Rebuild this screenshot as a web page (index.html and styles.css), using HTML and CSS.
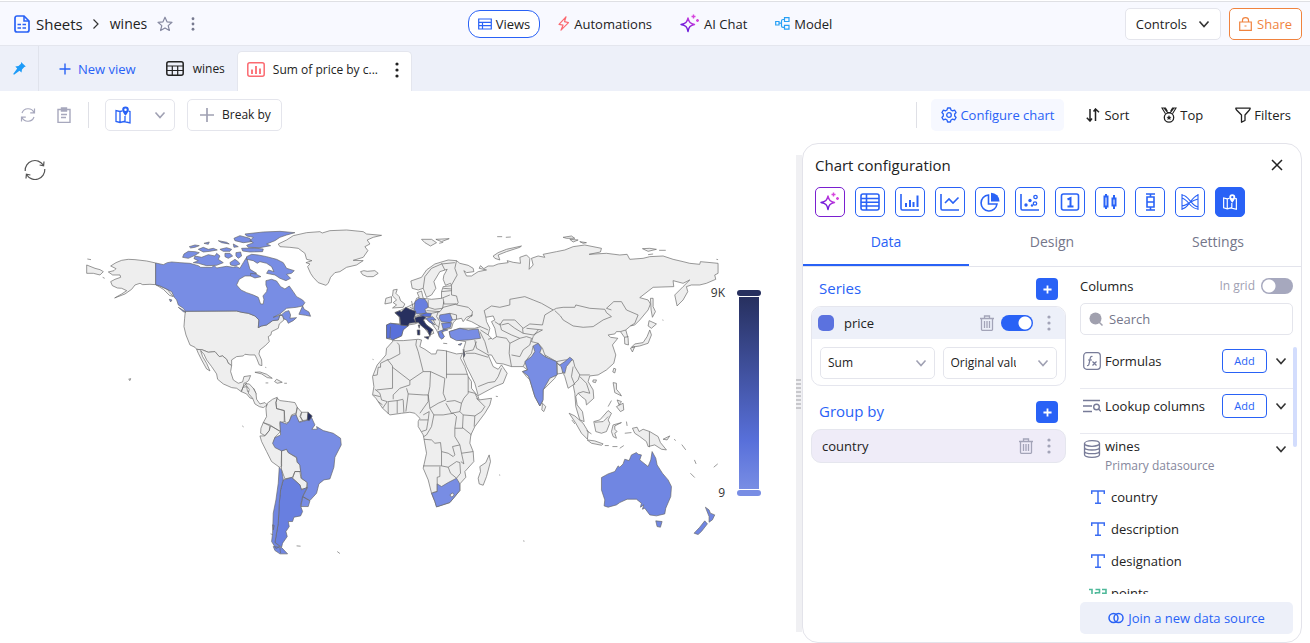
FILE: index.html
```html
<!DOCTYPE html>
<html lang="en">
<head>
<meta charset="utf-8">
<title>wines - Sheets</title>
<link rel="stylesheet" href="styles.css">
</head>
<body>
<svg class="defs" aria-hidden="true">
  <defs>
    <linearGradient id="magic" x1="0" y1="1" x2="1" y2="0"><stop offset="0" stop-color="#4a1be0"/><stop offset=".5" stop-color="#8a1fd8"/><stop offset="1" stop-color="#f04fe0"/></linearGradient>
    <symbol id="i-chev" viewBox="0 0 12 12"><path d="M1.500 3.500 6 8.500l4.500-5" fill="none" stroke="currentColor" stroke-width="1.600"/></symbol>
    <symbol id="i-dots" viewBox="0 0 4 16"><g fill="currentColor"><circle cx="2" cy="2" r="1.600"/><circle cx="2" cy="8" r="1.600"/><circle cx="2" cy="14" r="1.600"/></g></symbol>
    <symbol id="i-spark" viewBox="0 0 20 20"><g fill="none" stroke="url(#magic)" stroke-width="1.400" stroke-linejoin="round"><path d="M8 4c.9 4.200 2.300 5.600 6.500 6.500C10.300 11.400 8.900 12.800 8 17.500 7.100 12.800 5.700 11.400 1 10.500 5.700 9.600 7.100 8.200 8 4z"/></g><path d="M13.500.5v4M11.500 2.500h4M17.500 5v3M16 6.500h3" stroke="#d646dd" stroke-width="1.400"/></symbol>
    <symbol id="i-map" viewBox="0 0 16 18"><path d="M5 5.500 1 4.500v11l4 1 4-1 6 1.500V5.500l-1.500-.4M5 5.500l2.500-.6M5 5.500v11M10 10v6" fill="none" stroke="currentColor" stroke-width="1.300"/><path d="M10.500.5a3.300 3.300 0 0 0-3.300 3.300c0 2.200 3.300 6 3.300 6s3.300-3.800 3.300-6A3.300 3.300 0 0 0 10.500.5zm0 2a1.200 1.200 0 1 1 0 2.500 1.200 1.200 0 0 1 0-2.500z" fill="currentColor" fill-rule="evenodd"/></symbol>
    <symbol id="i-trash" viewBox="0 0 14 16"><path d="M0 3.500h14M4.500 3V1h5v2M1.500 4v10.500q0 .8.800.8h9.400q.8 0 .8-.8V4M4.500 6v7M7 6v7M9.500 6v7" fill="none" stroke="currentColor" stroke-width="1.300"/></symbol>
    <symbol id="i-text" viewBox="0 0 14 14"><path d="M.7 4V1h12.600v3M7 1v12.300M4 13.300h6" fill="none" stroke="currentColor" stroke-width="1.500"/></symbol>
    <symbol id="i-plus" viewBox="0 0 10 10"><path d="M5 .5v9M.5 5h9" fill="none" stroke="currentColor" stroke-width="2"/></symbol>
  </defs>
</svg>
<div class="app">
  <header class="header">
    <div class="crumbs">
      <svg class="icon-doc" viewBox="0 0 16 18"><path d="M10 1H3a2 2 0 0 0-2 2v12a2 2 0 0 0 2 2h10a2 2 0 0 0 2-2V6z" fill="none" stroke="#2962f6" stroke-width="1.700"/><path d="M10 1v5h5" fill="none" stroke="#2962f6" stroke-width="1.500"/><path d="M3.500 9.500h3.500M8.500 9.500H12M3.500 13h3.500M8.500 13H12" stroke="#2962f6" stroke-width="1.700"/></svg>
      <a class="crumb-root" href="#">Sheets</a>
      <svg class="icon-crumb" viewBox="0 0 8 12"><path d="M1.500 1.500 6 6l-4.500 4.500" fill="none" stroke="#333" stroke-width="1.200"/></svg>
      <a class="crumb-page" href="#">wines</a>
      <button class="ghost star" aria-label="Favourite"><svg viewBox="0 0 16 16"><path d="m8 1.200 2 4.600 5 .5-3.800 3.300 1.200 4.900L8 11.900l-4.400 2.600 1.200-4.900L1 6.300l5-.5z" fill="none" stroke="#8588a0" stroke-width="1.200" stroke-linejoin="round"/></svg></button>
      <button class="ghost dots" aria-label="More"><svg><use href="#i-dots"/></svg></button>
    </div>
    <nav class="modes">
      <a class="mode mode-on" href="#"><svg class="ic-views" viewBox="0 0 14 12"><path d="M.7 1h12.600v10H.7zM.7 4.300h12.600M.7 7.700h12.600M4.500 4.300V11" fill="none" stroke="#2962f6" stroke-width="1.200"/></svg>Views</a>
      <a class="mode" href="#"><svg class="ic-bolt" viewBox="0 0 12 15"><path d="M8 .8 1 8.300l4 .9-2 5 7.500-7.600-4-1z" fill="none" stroke="#fb6a71" stroke-width="1.200" stroke-linejoin="round"/></svg>Automations</a>
      <a class="mode" href="#"><svg class="ic-spark"><use href="#i-spark"/></svg>AI Chat</a>
      <a class="mode" href="#"><svg class="ic-model" viewBox="0 0 15 13"><path d="M.7 4.500H4v3.500H.7zM9.500.7H14v3.800H9.500zM9.500 8.300H14v3.800H9.500zM4 6.200h2.500M9.500 2.500H8Q6.500 2.500 6.500 4v5q0 1.300 1.500 1.300h1.500" fill="none" stroke="#27a0f5" stroke-width="1.200"/></svg>Model</a>
    </nav>
    <div class="header-actions">
      <button class="btn btn-plain">Controls<svg class="chev"><use href="#i-chev"/></svg></button>
      <button class="btn btn-share"><svg class="ic-lock" viewBox="0 0 13 14"><path d="M.7 5h11.600v8.300H.7zM3.500 5V3a3 2.300 0 0 1 6 0v2M5.500 9h2" fill="none" stroke="currentColor" stroke-width="1.200"/></svg>Share</button>
    </div>
  </header>

  <div class="viewbar">
    <button class="pin" aria-label="Pin"><svg viewBox="0 0 13 13"><path d="m8 0 4.800 4.500-1.500.6L9 7.500l-.5 3-2-1.800L1 12.800.2 12 4.200 6.500 2.300 4.500l3.200-.6L8 1.700z" fill="#1d9bf8"/></svg></button>
    <button class="newview"><svg class="plus-thin" viewBox="0 0 12 12"><path d="M6 .5v11M.5 6h11" stroke="currentColor" stroke-width="1.400"/></svg>New view</button>
    <button class="viewtab"><svg class="ic-grid" viewBox="0 0 18 15"><rect x=".8" y=".8" width="16.400" height="13.400" rx="2" fill="none" stroke="#222" stroke-width="1.500"/><path d="M1 5h16M1 9.500h16M6.300 5v9M11.700 5v9" stroke="#222" stroke-width="1.200"/></svg>wines</button>
    <div class="viewtab viewtab-on">
      <svg class="ic-grid" viewBox="0 0 18 15"><rect x=".8" y=".8" width="16.400" height="13.400" rx="2" fill="none" stroke="#fb6a71" stroke-width="1.500"/><path d="M5 7.500V12M9 4v8M13 6.500V12" stroke="#fb6a71" stroke-width="1.800"/></svg>
      <span>Sum of price by c...</span>
      <button class="ghost tabdots" aria-label="View menu"><svg><use href="#i-dots"/></svg></button>
    </div>
  </div>

  <div class="toolbar">
    <button class="ghost tool" aria-label="Refresh"><svg viewBox="0 0 16 16"><path d="M2 6a6.500 6.500 0 0 1 12-.5M14.500 1.500v4.300h-4.300M14 10a6.500 6.500 0 0 1-12 .5M1.500 14.500v-4.300h4.300" fill="none" stroke="currentColor" stroke-width="1.200"/></svg></button>
    <button class="ghost tool" aria-label="Clipboard"><svg viewBox="0 0 14 16"><path d="M1 2.500h12v13H1zM4.500 1h5v3h-5zM4 7.500h6M4 10.500h5" fill="none" stroke="currentColor" stroke-width="1.400"/></svg></button>
    <span class="rule"></span>
    <button class="btn btn-kind" aria-label="Chart type"><svg class="ic-map"><use href="#i-map"/></svg><svg class="chev chev-grey"><use href="#i-chev"/></svg></button>
    <button class="btn btn-break"><svg class="plus-grey" viewBox="0 0 14 14"><path d="M7 0v14M0 7h14" stroke="currentColor" stroke-width="1.700"/></svg>Break by</button>
    <div class="tools-right">
      <span class="rule"></span>
      <button class="act act-on"><svg class="ic16" viewBox="0 0 16 16"><path d="M6.600 1h2.800l.6 2 1.600.8 2-.7 1.500 2.400L13.700 7v2l1.400 1.500-1.500 2.400-2-.7-1.600.8-.6 2H6.600l-.6-2-1.600-.8-2 .7L.9 10.500 2.300 9V7L.9 5.500l1.500-2.400 2 .7L6 3z" fill="none" stroke="currentColor" stroke-width="1.300" stroke-linejoin="round"/><circle cx="8" cy="8" r="2.300" fill="none" stroke="currentColor" stroke-width="1.300"/></svg>Configure chart</button>
      <button class="act act-sort"><svg class="ic-sort" viewBox="0 0 14 14"><path d="M4 1v12M.8 9.800 4 13l2-2.500M9.500 13V1M13 4.200 9.500 1 7.500 3.500" fill="none" stroke="#222" stroke-width="1.500"/></svg>Sort</button>
      <button class="act"><svg class="ic16" viewBox="0 0 16 16"><path d="M4.500 6.800 1 1h3.500l2 3.500M11.500 6.800 15 1h-3.500l-2 3.500M3 1l3.500 4.500h3L13 1" fill="none" stroke="#222" stroke-width="1.100"/><circle cx="8" cy="10.500" r="4.700" fill="none" stroke="#222" stroke-width="1.300"/><path d="m8 8 .8 1.700 1.700.2-1.300 1.200.4 1.800L8 12l-1.600.9.400-1.800-1.300-1.200 1.700-.2z" fill="#222"/></svg>Top</button>
      <button class="act"><svg class="ic16" viewBox="0 0 16 16"><path d="M.8 1.200h14.400q0 1-1 2L10 8v5.500L6.500 15.200V8L1.800 3.200q-1-1-1-2z" fill="none" stroke="#222" stroke-width="1.300" stroke-linejoin="round"/></svg>Filters</button>
    </div>
  </div>

  <main class="main">
    <section class="chart">
      <button class="ghost reset" aria-label="Reset zoom"><svg viewBox="0 0 22 22"><path d="M1.200 12a9.800 9.800 0 0 1 18-6M20 2.500l-.4 4.300-4-.8M20.800 10a9.800 9.800 0 0 1-18 6M2 19.500l.4-4.300 4 .8" fill="none" stroke="#555" stroke-width="1.200"/></svg></button>
      <svg class="map" viewBox="80 225 645 335" role="img" aria-label="Sum of price by country">
        <g class="land" transform="translate(80 220) scale(.33333)">
          <path d="M227 129 200 123 165 119 145 118 125 121 108 128 92 138 108 146 102 152 85 156 98 165 120 165 122 172 105 178 92 185 97 197 112 204 125 205 140 212 125 222 104 234 135 222 155 208 165 195 180 190 188 194 210 193 227 194 240 198 262 208 280 230 268 226 250 208 227 194zM20 135 45 145 60 149 70 155 60 165 40 160 20 160zM22 117 33 119M68 172 74 175M146 478 152 476 150 482z"/>
          <path d="M316 274 470 273 485 277 505 280 525 288 537 300 535 323 545 318 560 315 578 302 595 300 600 285 608 287 612 300 598 312 595 325 575 335 573 345 565 350 568 365 555 378 540 390 537 402 545 420 546 437 538 435 530 415 525 405 510 405 495 403 490 408 470 410 455 420 455 437 445 430 440 418 428 408 418 410 405 395 385 397 368 390 350 388 345 382 330 375 318 345 312 320 314 295z"/>
          <path d="M350 388 368 390 385 397 405 395 418 410 428 408 440 418 445 430 455 437 452 455 460 480 475 490 488 486 492 470 512 467 506 482 498 488 492 490 490 500 484 515 470 505 455 503 430 492 413 478 410 462 395 440 380 420 372 403 362 392 368 410 380 430 390 453 380 447 365 420 355 400zM484 515 490 500 500 490 503 502 522 506 528 520 525 538 510 534 500 522zM490 502 500 500 503 515 520 510M525 457 540 456 560 463 577 475 562 473 545 462zM584 485 590 478 607 487 592 490zM557 489H565M613 490H621M556 442 559 443"/>
          <path d="M595 72 620 60 640 47 680 38 720 35 727 39 750 32 800 30 850 35 860 42 905 46 880 52 862 60 870 72 855 80 864 92 850 112 820 121 850 122 830 135 800 142 780 155 765 158 752 172 745 190 738 196 715 188 700 172 692 160 683 140 690 132 678 128 696 122 680 118 675 100 655 85 630 82 600 80zM842 155 852 152 862 154 885 152 895 160 880 170 862 170 848 164z"/>
          <g class="v1">
            <path d="M227 129 250 134 262 128 275 126 300 128 330 130 355 137 362 142 395 142 403 137 410 144 440 139 460 142 470 140 480 145 490 128 500 112 505 130 510 148 530 160 512 168 495 168 478 178 470 195 483 210 500 218 520 225 535 232 542 252 550 252 552 238 549 228 560 215 562 205 558 195 558 182 575 178 590 183 602 200 615 207 628 198 640 215 650 230 668 240 675 248 668 258 650 262 620 265 600 282 580 292 605 284 616 275 627 272 632 285 630 295 650 293 640 302 625 310 620 300 612 297 608 287 600 285 595 300 578 302 560 315 545 318 535 323 537 300 525 288 505 280 485 277 470 273 316 274 310 265 295 255 290 240 283 232 275 215 255 205 240 198 227 194z"/>
            <path d="M668 258 673 268 687 276 692 289 677 286 657 283zM500 110 515 103 535 105 560 110 590 118 610 128 620 145 643 152 635 160 620 163 632 175 618 182 600 175 585 165 560 160 566 150 582 155 575 140 560 130 540 125 532 130 520 122 500 118zM495 42 550 36 600 34 645 38 620 45 600 52 585 62 560 72 572 77 540 83 505 82 500 76 520 68 510 62 520 52 500 48zM462 55 480 47 510 55 515 65 490 68 465 62zM485 85 520 84 550 87 548 95 510 96 488 93zM345 108 365 112 385 104 405 108 410 100 420 108 415 118 430 128 410 136 380 137 355 130 340 128 355 122 342 116zM312 102 325 94 345 95 358 98 345 106 325 115 308 112zM355 88 370 82 385 88 400 85 412 90 390 94 370 96zM328 80 345 75 358 77 345 82 332 84zM372 70 388 66 385 73zM420 88 440 83 455 88 450 94 430 94zM415 62 440 67 448 72 425 68zM460 72 475 80 462 82zM435 100 450 100 458 108 445 115 435 110zM468 98 482 96 485 108 475 115 468 108zM450 128 465 118 475 125 480 132 465 138 452 135zM512 160 528 162 543 170 525 174 512 168zM295 262 305 268 318 277 310 275zM268 238 276 240 272 246z"/>
          </g>
        </g>
        <g class="land" transform="translate(220 380) scale(.33333)">
          <path d="M75 12 88 12 100 25 108 40 110 58 120 72 135 68 142 75 130 83 118 80 105 72 98 55 85 40 88 28zM142 70 158 58 172 52 168 68 170 86 193 92 195 125 180 128 182 155 165 145 150 135 130 128 140 110 138 85zM172 55 180 62 205 65 225 68 232 82 228 100 215 105 208 125 200 130 193 122 193 92 170 86 168 68zM232 82 245 97 240 110 248 122 236 127 228 108zM245 97 265 97 262 120 248 122 242 110zM130 128 150 138 148 152 135 167 122 160 123 145zM152 138 165 145 182 155 165 172 160 190 170 203 180 205 185 212 185 258 180 263 155 245 140 215 125 185 120 168 135 168 148 152zM185 213 200 208 205 218 230 234 232 248 240 252 242 275 225 275 218 292 195 297 185 270 184 250zM225 275 240 275 243 295 262 307 260 325 243 328 240 315 218 295zM67 138 71 141M230 498 242 499M352 515 360 521"/>
          <path class="v1" d="M180 125 200 132 208 125 215 108 228 104 238 127 262 121 275 113 285 135 276 148 292 148 290 140 310 152 340 160 362 175 364 195 345 232 342 262 330 297 312 300 297 312 290 340 270 362 248 350 262 325 262 308 245 295 242 272 240 256 232 246 230 232 205 218 200 208 185 213 165 203 158 190 165 173 182 165zM248 350 270 363 265 380 243 380z"/>
          <path class="v3" d="M190 300 215 293 240 315 245 330 262 322 248 350 242 378 248 395 242 408 222 412 218 425 205 425 208 440 198 455 202 470 188 490 185 502 165 488 168 470 175 430 178 370 182 330z"/>
          <path class="v2" d="M178 263 185 270 190 298 182 330 178 370 175 430 168 470 165 488 180 500 168 506 155 485 158 460 160 400 168 360 175 310zM158 435 163 437 160 450zM152 462 158 464M160 500 185 503 203 522 180 522 165 512zM180 505 182 520"/>
          <path class="v9" d="M264 97 277 108 268 122 262 120z"/>
        </g>
        <g class="land" transform="translate(360 220) scale(.33333)">
          <path d="M157 205 153 183 185 172 200 150 225 132 265 120 290 122 300 130 325 136 340 145 342 155 320 158 312 152 320 168 335 168 355 155 380 150 358 145 362 137 372 146 385 138 400 138 415 132 445 128 442 122 460 127 482 130 480 112 500 105 510 115 508 148 520 135 515 115 535 108 555 112 550 103 590 95 615 90 640 80 675 75 725 85 722 96 688 103 740 100 780 105 802 103 810 118 850 115 870 110 910 108 940 118 970 125 990 130 1020 133 1022 125 1075 130 1075 160 1065 165 1068 178 1040 190 1020 195 995 195 980 200 984 215 970 240 952 258 945 225 970 200 990 180 970 190 940 182 942 200 880 202 840 233 865 240 872 252 865 270 840 300 825 315 812 318 798 330 805 355 806 375 795 372 794 352 782 335 770 335 765 342 745 345 752 352 774 355 758 375 768 405 762 430 740 450 715 465 690 468 685 485 700 510 702 535 680 555 678 540 665 530 655 520 648 530 652 555 668 575 673 605 660 600 648 560 645 520 640 495 625 505 615 470 608 455 608 460 592 462 585 475 550 510 548 545 540 558 525 530 510 480 500 470 488 455 503 450 490 440 455 440 430 432 410 430 395 405 385 405 400 440 415 448 425 435 442 460 430 490 405 500 355 527 345 490 320 440 310 415 315 405 312 385 318 365 300 362 272 352 268 335 300 325 345 325 362 320 335 305 320 300 338 285 320 292 310 305 305 295 290 298 280 308 275 325 248 330 250 355 240 352 230 330 215 310 200 298 190 296 195 310 218 330 222 340 210 345 190 320 175 308 165 312 145 315 130 328 125 348 98 360 80 355 80 315 92 310 120 312 118 290 105 278 120 272 140 262 165 250 170 235 178 232 172 218 185 213 190 235 215 238 245 235 245 215 250 200 275 197 272 190 257 196 250 178 252 166 262 148 240 155 222 185 228 205 215 225 200 232 190 205 175 210z"/>
          <path d="M100 210 112 208 108 220 118 230 122 242 135 252 130 262 98 264 110 255 100 248 110 240 98 228zM78 235 95 230 95 248 75 252zM185 58 215 58 230 68 212 78 195 68zM228 58 268 56 245 65zM238 70 250 67M400 108 415 98 440 88 485 78 480 82 440 95 415 105 420 120 405 115zM412 50H427M438 52 453 51M610 52 635 48 645 55 620 55zM630 58 655 60 640 66zM660 65 680 68 670 70zM848 86 870 85 890 88 865 94zM898 91H918M865 104 880 102M1070 118 1075 119"/>
          <path d="M872 235 880 235 880 260 887 275 878 292 874 270zM868 302 890 312 875 325 865 318zM870 330 875 345 865 370 840 378 815 382 825 372 850 368 862 350zM812 385 825 380 818 396zM762 445 768 447 765 459 759 456zM700 480 710 480 707 488 699 486zM760 488 770 490 770 508 780 520 785 528 765 518zM770 560 790 550 792 570 782 575zM745 560 755 542M772 540 785 545 778 555zM548 550 558 560 552 575 546 570zM628 580 645 588 670 610 685 635 683 658 665 640 648 610zM682 660 705 663 730 672 725 676 695 670zM735 677H747M758 680H773M780 685 792 677M702 605 720 600 745 572 755 580 745 600 750 610 740 635 725 640 708 635zM705 607 730 605 745 590M760 615 785 608 765 618 765 628 772 635 765 640 770 655 760 650 755 635zM800 605 802 618M795 640 815 638M818 625 832 622 838 635 850 628 870 635 895 650 902 668 920 690 905 688 885 675 865 680 860 665 840 650 825 640zM869 635V682M910 658 930 648 922 660zM943 658 948 662M966 674 978 690M1004 720 1009 732M1062 742 1074 732M908 300 911 301M636 600 645 612M680 632 695 642"/>
          <path class="line" d="M378 292 373 272 395 258 420 262 450 255 450 238 495 230 520 240 545 250 580 270 590 265 610 262 645 262 648 255 690 265 735 268 740 278 755 290 730 300 700 320 670 322 640 318 610 300 602 288 585 272M580 270 555 285 548 315 510 312 490 325 465 300 430 300 420 315 405 305M755 270 740 265 762 245 785 245 800 270 835 285 825 310 812 318M782 335 798 330M794 352 806 350M535 330 520 350 515 365 535 370 548 385 555 405 590 425 615 420 640 420 645 440 660 465 690 465M592 425 592 462M605 440 615 460M640 495 655 480 660 465M660 470 680 490 690 520M655 520 670 515 690 520M640 440 635 470 645 495M360 335 375 365 385 400M385 358 410 350 440 355 450 370 448 400 455 440M450 370 480 355 500 350 515 355M455 405 480 410 490 390 510 375 515 355M490 440 500 420 515 400 520 378M420 310 425 330 455 345 480 355M425 315 445 310 465 325 490 340M500 325 548 330 520 345 490 340 488 325M345 360 350 385 385 405M315 395 340 390 350 365M318 400 345 400 385 412M355 500 385 488 405 485 415 470 425 445M362 320 385 330M362 330 385 345M290 122 285 145 292 165 275 195M245 130 255 150M190 205 195 170 215 145 245 132 285 128M275 197 275 225 290 228 295 248 290 255 325 262 338 275 335 290M245 215 275 212M250 205 275 207M245 235 270 225M250 235 252 252 290 252M205 240 205 262 225 268 248 265 252 245M200 272 240 275 250 262 290 252M235 275 230 290 240 305 235 330M215 280 240 275M220 300 228 315 238 322M150 262 168 270M165 290 180 285M155 243 160 265M270 280 290 285 290 298M278 300 290 298M555 405 562 418 590 428"/>
          <path class="water" d="M378 292 400 288 405 300 395 305 405 325 410 350 398 358 385 345 390 325 380 305z"/>
          <path class="v3" d="M165 245 178 235 195 237 203 250 205 262 195 268 200 280 170 282 163 268z"/>
          <path class="v4" d="M80 315 92 310 145 318 130 330 125 348 98 360 92 355 80 355zM92 320 90 355M179 285 200 279 215 280 212 290 190 290z"/>
          <path class="v9" d="M105 278 120 272 124 276 138 262 150 268 168 274 166 284 162 295 168 308 148 310 145 318 122 315 120 292zM165 293 175 290 190 288 198 293 190 300 200 315 220 330 215 335 210 350 203 332 185 318 175 307 167 308zM193 351 208 350 205 358zM172 330 180 330 180 345 173 345zM175 315 180 315 178 325zM310 388 315 405 311 412zM992 760 1005 773"/>
          <path class="v2" d="M198 295 218 290 228 300 212 300 225 315 208 306zM240 285 270 280 278 300 270 308 245 305 238 295zM245 310 275 308 272 322 250 328zM235 335 255 328 264 330 245 336 254 350 245 358 238 350zM250 370 262 371M295 374 306 370 302 376z"/>
          <path class="v1" d="M268 335 300 325 325 330 355 327 362 355 325 360 290 362 272 352zM520 378 535 370 545 385 540 398 555 410 590 425 592 465 570 475 550 510 550 540 540 558 525 530 510 480 505 468 488 455 503 450 495 425 515 410 525 395zM592 430 600 435 615 425 630 412 638 418 620 440 615 460 608 455 604 440z"/>
          <path class="v2" d="M725 773 745 762 765 755 775 738 780 742 790 732 795 718 808 722 815 705 830 698 835 703 845 705 840 720 865 740 873 720 877 695 888 715 892 735 908 760 925 780 935 800 933 830 918 865 915 882 890 888 870 885 855 865 848 868 852 855 842 862 845 850 830 838 802 838 780 848 770 855 745 862 733 858 735 840 725 810zM888 903 907 905 902 922 892 920zM1037 862 1048 870 1052 880 1065 885 1058 900 1048 907 1048 890zM1035 903 1043 912 1025 935 1015 944 1003 940 1020 922z"/>
          <path d="M490 963 494 964"/>
        </g>
        <g class="land" transform="translate(360 280) scale(.33333)">
          <path d="M98 182 130 182 175 178 185 180 180 200 195 208 215 222 228 222 232 210 255 212 290 222 308 220 302 235 315 260 325 290 335 305 335 325 355 350 358 360 395 355 390 375 375 400 345 440 333 465 330 490 340 515 342 545 315 575 318 592 300 612 300 632 270 668 230 681 225 665 215 640 205 600 190 565 200 520 192 475 190 465 175 440 175 425 180 415 165 400 150 397 125 400 90 405 68 385 48 355 38 345 42 320 38 290 52 255 65 240 78 225 80 205 98 185zM388 525 392 545 380 590 370 616 358 612 355 595 362 575 360 560 378 548zM38 238 41 239M408 349 414 350M418 585 421 586"/>
          <path class="line" d="M40 287 52 285 55 262 62 262 62 250 82 240M82 238 98 258 98 325 50 330M82 240 90 238 120 222 118 195 112 188M98 262 150 302 150 315 120 325 100 345 100 358M150 302 190 275 175 215 168 195 170 180M190 275 212 275 255 295M260 212V295M260 283H322M212 275 210 320 205 345 190 345 145 342 140 325M255 295 250 340 258 360 235 370 210 385 205 345M325 290 325 340 312 355 305 370 285 362 260 365M305 370 300 395 275 400 258 370M325 335 345 340 355 360M350 355 375 380 365 395 345 408 310 405 300 395M345 408 343 440M310 405 308 445 285 445M308 443 335 465M285 445 290 410 280 400 250 405 222 405 210 385M222 405 215 440 200 465 192 470M180 420 205 420 200 450 185 455M205 420 208 395 190 405M205 345 205 365 180 400M192 478 215 480 225 490 242 488 245 515 245 558 190 558M245 515 265 520 280 530 285 525 278 500 300 495 285 470 285 445M300 495 305 520 340 515M305 520 312 552 303 545M245 558 265 562 290 545 300 548 302 580 290 595 272 580 265 562M240 560V590L232 592V635L218 638M45 328 60 340 65 360 82 365M40 345 60 350M55 365 68 375M68 385 82 365M85 365V402M112 362V400M130 360 132 398M145 342 138 395M85 365 112 362 130 358"/>
          <path class="v1" fill-rule="evenodd" d="M215 640 232 635 232 612 245 620 265 608 290 595 300 612 300 632 270 668 230 681 225 665zM270 645 278 639 283 645 276 652z"/>
        </g>
      </svg>
      <div class="legend">
        <div class="legend-labels"><span>9K</span><span>9</span></div>
        <div class="legend-scale"><i class="cap cap-hi"></i><i class="ramp"></i><i class="cap cap-lo"></i></div>
      </div>
    </section>

    <div class="splitter"><span class="grip"></span></div>

    <aside class="panel">
      <div class="panel-head"><h2>Chart configuration</h2><button class="ghost close" aria-label="Close"><svg viewBox="0 0 12 12"><path d="m1 1 10 10M11 1 1 11" stroke="#222" stroke-width="1.500"/></svg></button></div>
      <div class="kinds">
        <button class="kind kind-ai" aria-label="AI"><svg viewBox="0 0 20 20"><use href="#i-spark"/></svg></button>
        <button class="kind" aria-label="Table"><svg viewBox="0 0 20 20"><rect x="1" y="2" width="18" height="16" rx="2"/><path d="M1 6.500h18M1 10.300h18M1 14h18M6.500 2v16"/></svg></button>
        <button class="kind" aria-label="Bar"><svg viewBox="0 0 20 20"><path d="M1 2v14.500q0 1.500 1.500 1.500H19"/><path d="M6 15v-4M10 15V8M13.500 15v-5M17.500 15V3.500" stroke-width="2"/></svg></button>
        <button class="kind" aria-label="Line"><svg viewBox="0 0 20 20"><path d="M1 2v14.500q0 1.500 1.500 1.500H19M5 11l4-4 4 4 5.500-5.500"/></svg></button>
        <button class="kind" aria-label="Pie"><svg viewBox="0 0 20 20"><path d="M8.500 3a8 8 0 1 0 8.500 9H8.500z"/><path d="M11 .7a8.500 8.500 0 0 1 8.500 8.800H11z" fill="#2962f6" stroke="none"/></svg></button>
        <button class="kind" aria-label="Scatter"><svg viewBox="0 0 20 20"><path d="M1 2v14.500q0 1.500 1.500 1.500H19"/><g fill="#2962f6" stroke="none"><circle cx="6" cy="13" r="1.700"/><circle cx="10" cy="8.500" r="1.700"/><circle cx="12" cy="13.500" r="1.200"/></g><g stroke-width="1.300"><circle cx="15.500" cy="5" r="1.700"/><circle cx="15" cy="11.500" r="1.700"/></g></svg></button>
        <button class="kind kind-num" aria-label="Number"><svg viewBox="0 0 20 20"><rect x="1.500" y="2" width="17" height="16" rx="2"/><path d="M7.500 7.500 10.500 6v8.500M7.500 14.500h6" stroke-width="2"/></svg></button>
        <button class="kind" aria-label="Candlestick"><svg viewBox="0 0 20 20"><path d="M4.500 4.500h3v10h-3zM6 2v2.500M6 14.500V17M12.500 6.500h3v7h-3zM14 3v3.500M14 13.500V17" stroke-width="2"/></svg></button>
        <button class="kind" aria-label="Box plot"><svg viewBox="0 0 20 20"><path d="M6 2h9M6 18h9M10.500 2v3M10.500 15v3M7 5h7v10H7zM7 10h7"/></svg></button>
        <button class="kind" aria-label="Sankey"><svg viewBox="0 0 20 20"><path d="M2 2v16M18 2v16M2 3c7 0 9 11 16 12M2 6c7 2 8 11 16 11M2 17C9 16 10 6 18 3M2 14C8 13 10 9 18 7" stroke-width="1.100"/></svg></button>
        <button class="kind kind-on" aria-label="Map"><svg viewBox="-2 -2 20 22"><use href="#i-map" width="16" height="18"/></svg></button>
      </div>
      <div class="ptabs" role="tablist">
        <button class="ptab ptab-on" role="tab">Data</button><button class="ptab" role="tab">Design</button><button class="ptab" role="tab">Settings</button>
      </div>
      <div class="panel-body">
        <div class="fields">
          <div class="field-head"><h3>Series</h3><button class="add" aria-label="Add series"><svg><use href="#i-plus"/></svg></button></div>
          <div class="card">
            <div class="card-head">
              <span class="swatch"></span><span class="card-name">price</span>
              <button class="ghost trash" aria-label="Delete"><svg><use href="#i-trash"/></svg></button>
              <input class="toggle" type="checkbox" checked aria-label="Show price">
              <button class="ghost vdots" aria-label="More"><svg><use href="#i-dots"/></svg></button>
            </div>
            <div class="card-body">
              <div class="pick"><select aria-label="Aggregation"><option>Sum</option></select><svg class="chev chev-grey"><use href="#i-chev"/></svg></div>
              <div class="pick"><select aria-label="Value format"><option>Original value</option></select><svg class="chev chev-grey"><use href="#i-chev"/></svg></div>
            </div>
          </div>
          <div class="field-head group-head"><h3>Group by</h3><button class="add" aria-label="Add group"><svg><use href="#i-plus"/></svg></button></div>
          <div class="card card-group">
            <span class="card-name">country</span>
            <button class="ghost trash" aria-label="Delete"><svg><use href="#i-trash"/></svg></button>
            <button class="ghost vdots" aria-label="More"><svg><use href="#i-dots"/></svg></button>
          </div>
        </div>
        <div class="columns">
          <div class="col-head"><h4>Columns</h4><label for="ingrid">In grid</label><input class="toggle" id="ingrid" type="checkbox"></div>
          <div class="search"><svg viewBox="0 0 14 14"><circle cx="6.500" cy="6.500" r="6" fill="#a0a0ae"/><path d="m10 10 3.500 3.500" stroke="#a0a0ae" stroke-width="1.500"/></svg><input type="text" placeholder="Search" aria-label="Search"></div>
          <div class="list">
            <span class="thumb"></span>
            <div class="row"><svg class="row-ic" viewBox="0 0 18 18"><rect x=".7" y=".7" width="16.600" height="16.600" rx="3" fill="none" stroke="#777b98" stroke-width="1.200"/><path d="M9.500 4.500q-2-.5-2.300 2L6 12q-.4 2-2 1.500M5 8h4M9.500 9.500l4 4M13.500 9.500l-4 4" fill="none" stroke="#777b98" stroke-width="1.200"/></svg><strong>Formulas</strong><button class="addbtn">Add</button><svg class="chev chev-row"><use href="#i-chev"/></svg></div>
            <div class="row"><svg class="row-ic" viewBox="0 0 18 18"><path d="M0 3.500h17M0 9h9M0 14.500h9" stroke="#777b98" stroke-width="1.500"/><circle cx="13.500" cy="10" r="2.800" fill="none" stroke="#777b98" stroke-width="1.400"/><path d="m15.500 12 2.500 2.500" stroke="#777b98" stroke-width="1.400"/></svg><strong>Lookup columns</strong><button class="addbtn">Add</button><svg class="chev chev-row"><use href="#i-chev"/></svg></div>
            <div class="source"><svg class="row-ic" viewBox="0 0 18 18"><path d="M1.500 3.500v11c0 1.500 3 2.800 7.500 2.800s7.500-1.300 7.500-2.800v-11M1.500 7.200C1.500 8.700 4.500 10 9 10s7.500-1.300 7.500-2.800M1.500 10.900c0 1.500 3 2.800 7.500 2.800s7.500-1.300 7.500-2.800" fill="none" stroke="#777b98" stroke-width="1.300"/><ellipse cx="9" cy="3.500" rx="7.500" ry="2.800" fill="none" stroke="#777b98" stroke-width="1.300"/></svg><div class="source-text"><strong>wines</strong><span>Primary datasource</span></div><svg class="chev chev-row"><use href="#i-chev"/></svg></div>
            <ul class="cols">
              <li><svg class="ic-t"><use href="#i-text"/></svg>country</li>
              <li><svg class="ic-t"><use href="#i-text"/></svg>description</li>
              <li><svg class="ic-t"><use href="#i-text"/></svg>designation</li>
              <li class="num"><svg class="ic-n" viewBox="0 0 18 10"><path d="M0 1.500h3V9M6.500 1.500h4v3.300h-4V9h4.500M13 1.500h4V9h-4M13 5.200h4" fill="none" stroke="#4fb99a" stroke-width="1.600"/></svg>points</li>
            </ul>
          </div>
          <button class="join"><svg viewBox="0 0 16 12"><circle cx="5.500" cy="6" r="4.500" fill="none" stroke="currentColor" stroke-width="1.500"/><circle cx="10.500" cy="6" r="4.500" fill="none" stroke="currentColor" stroke-width="1.500"/></svg>Join a new data source</button>
        </div>
      </div>
    </aside>
  </main>
</div>
</body>
</html>
```
FILE: styles.css
```css
* { box-sizing: border-box; }
body { margin: 0; font: 13px/20px "Open Sans", "Noto Sans", sans-serif; color: #222; background: #fff; }
button, input, select { font: inherit; color: inherit; margin: 0; }
button { background: none; border: 0; padding: 0; cursor: pointer; display: flex; align-items: center; white-space: nowrap; }
a { color: inherit; text-decoration: none; }
h2, h3, h4, ul { margin: 0; padding: 0; }
svg { display: block; flex: none; }
.defs { position: absolute; width: 0; height: 0; }
.app { display: flex; flex-direction: column; height: 100vh; min-height: 560px; overflow: hidden; border-top: 1px solid #fff; }

.header { display: grid; grid-template-columns: 1fr auto 1fr; align-items: center; height: 45px; flex: none; padding: 0 8px 0 14px; background: #f8f9ff; border-top: 1px solid #dfe0e4; border-bottom: 1px solid #e4e6ee; font-weight: 500; }
.crumbs { display: flex; align-items: center; }
.icon-doc { width: 16px; height: 18px; margin-right: 6px; }
.crumb-root { font-size: 15px; }
.icon-crumb { width: 8px; height: 12px; margin: 0 10px 0 9px; }
.crumb-page { font-size: 14px; }
.star { margin-left: 10px; }
.star svg { width: 16px; height: 16px; }
.dots { margin-left: 18px; color: #777a90; }
.dots svg { width: 4px; height: 14px; }
.modes { display: flex; align-items: center; gap: 8px; padding-right: 6px; }
.mode { display: flex; align-items: center; gap: 4px; height: 28px; padding: 0 10px; }
.mode-on { padding: 0 9px; background: #fff; border: 1px solid #2962f6; border-radius: 12px; }
.ic-views { width: 14px; height: 12px; }
.ic-bolt { width: 12px; height: 15px; }
.ic-spark { width: 20px; height: 20px; }
.ic-model { width: 15px; height: 13px; }
.header-actions { display: flex; justify-content: flex-end; gap: 8px; }
.btn { height: 32px; border: 1px solid #e4e5ec; border-radius: 5px; background: #fff; padding: 0 10px; }
.btn-plain { gap: 11px; }
.btn-share { gap: 5px; padding: 0 9px; color: #f0833e; border-color: #f0833e; }
.ic-lock { width: 13px; height: 14px; }
.chev { width: 12px; height: 12px; color: #333; }
.chev-grey { color: #a0a1b3; }

.viewbar { display: flex; align-items: stretch; height: 45px; flex: none; background: #edf0f9; }
.pin { width: 39px; justify-content: center; border-right: 1px solid #e0e3ec; }
.pin svg { width: 13px; height: 13px; }
.newview { margin-left: 20px; gap: 7px; color: #2962f6; font-weight: 500; }
.plus-thin { width: 12px; height: 12px; }
.viewtab { display: flex; align-items: center; margin-left: 30px; gap: 9px; font-size: 12px; }
.ic-grid { width: 18px; height: 15px; }
.viewtab-on { margin: 5px 0 0 12px; padding: 0 12px 4px 9px; width: 175px; gap: 8px; background: #fff; border: 1px solid #e4e6ee; border-bottom: 0; border-radius: 5px 5px 0 0; font-weight: 500; }
.tabdots { margin-left: auto; }
.tabdots svg { width: 4px; height: 16px; }

.toolbar { display: flex; align-items: center; height: 48px; flex: none; padding: 0 9px 0 20px; }
.tool { color: #a7a8bd; margin-right: 20px; }
.tool svg { width: 16px; height: 16px; }
.toolbar > .tool + .tool { margin-right: 16px; }
.rule { width: 1px; height: 26px; background: #dfe0e6; }
.btn-kind { margin-left: 16px; width: 70px; justify-content: space-between; padding: 0 8px 0 9px; }
.ic-map { width: 16px; height: 18px; color: #2962f6; }
.btn-break { margin-left: 12px; padding: 0 10px 0 12px; gap: 8px; font-size: 12px; }
.plus-grey { width: 14px; height: 14px; color: #a0a1b3; }
.tools-right { display: flex; align-items: center; margin-left: auto; font-weight: 500; }
.act { height: 32px; gap: 3px; padding: 0 10px; margin-left: 12px; border-radius: 5px; }
.act-on { margin-left: 14px; background: #f6f8ff; color: #2962f6; }
.act-sort { gap: 4px; }
.ic16 { width: 16px; height: 16px; }
.ic-sort { width: 14px; height: 14px; }

.main { display: flex; flex: 1; min-height: 0; padding: 4px 8px 0 0; }
.chart { position: relative; flex: 1; min-width: 0; padding-top: 16px; }
.reset { margin-left: 24px; }
.reset svg { width: 22px; height: 22px; }
.map { width: 81%; margin: 44px 0 0 10%; height: auto; }
.land path { fill: #eee; stroke: #666; stroke-width: 2; stroke-linejoin: round; }
.land .line { fill: none; }
.land .water { fill: #fff; }
.land .v1, .land .v1 path { fill: #788de4; }
.land .v2 { fill: #7086e2; }
.land .v3 { fill: #687fe0; }
.land .v4 { fill: #5870da; }
.land .v9 { fill: #27305f; }
.legend { position: absolute; right: 35px; top: 147px; display: flex; gap: 12px; }
.legend-labels { display: flex; flex-direction: column; justify-content: space-between; align-items: flex-end; font-size: 12px; line-height: 6px; color: #333; }
.legend-scale { display: flex; flex-direction: column; align-items: center; width: 24px; }
.cap { width: 24px; height: 6px; border-radius: 3px; }
.cap-hi { background: #27305f; }
.cap-lo { background: #788de4; }
.ramp { width: 20px; height: 192px; margin: 1px 0; background: linear-gradient(#27305f, #5870da 75%, #788de4); }

.splitter { display: flex; align-items: center; width: 6px; flex: none; margin: 12px 0 11px; background: #f0f0f3; }
.grip { width: 5px; height: 30px; background: repeating-linear-gradient(#c8c8cc 0 2px, transparent 2px 4px); }

.panel { display: flex; flex-direction: column; flex: none; width: 500px; min-height: 0; border: 1px solid #e3e3ea; border-radius: 16px; background: #fff; overflow: hidden; }
.panel-head { display: flex; align-items: center; justify-content: space-between; padding: 11px 18px 0 12px; }
h2 { font-size: 15px; line-height: 20px; font-weight: 500; }
.close svg { width: 12px; height: 12px; }
.kinds { display: flex; gap: 10px; padding: 12px 12px 0; }
.kind { width: 30px; height: 30px; justify-content: center; border: 1px solid #2962f6; border-radius: 5px; }
.kind svg { width: 20px; height: 20px; fill: none; stroke: #2962f6; stroke-width: 1.600px; }
.kind-ai { border-color: #7a1fd0; }
.kind-ai svg, .kind-on svg { stroke: none; stroke-width: 0; }
.kind-on { background: #2962f6; color: #fff; }
.ptabs { display: grid; grid-template-columns: repeat(3, 1fr); border-bottom: 1px solid #e3e4ec; }
.ptab { height: 49px; padding-top: 3px; justify-content: center; font-size: 14px; color: #74768a; border-bottom: 2px solid transparent; }
.ptab-on { color: #2962f6; font-weight: 500; border-color: #2962f6; }
.panel-body { display: grid; grid-template-columns: 255px 1fr; gap: 14px; flex: 1; min-height: 0; padding: 9px 8px 8px 8px; }
.field-head { display: flex; align-items: flex-start; justify-content: space-between; padding: 2px 8px 6px; }
h3 { font-size: 15px; line-height: 20px; font-weight: 500; color: #2962f6; }
.group-head { padding-top: 15px; }
.add { width: 22px; height: 22px; justify-content: center; border-radius: 4px; background: #2962f6; color: #fff; }
.add svg { width: 9px; height: 9px; }
.card { border: 1px solid #e5e6ee; border-radius: 10px; overflow: hidden; }
.card-head, .card-group { display: flex; align-items: center; height: 32px; padding: 0 14px 0 6px; background: #edf0f9; font-weight: 500; }
.card-group { height: 34px; padding-left: 10px; background: #efecf8; }
.swatch { width: 16px; height: 16px; margin-right: 10px; border-radius: 5px; background: #5b72df; }
.card-name { margin-right: auto; }
.trash { color: #a3a4b8; }
.trash svg { width: 14px; height: 16px; }
.vdots { margin-left: 14px; color: #a3a4b8; }
.vdots svg { width: 4px; height: 16px; }
.toggle { appearance: none; width: 32px; height: 16px; border-radius: 8px; background: radial-gradient(circle at 8px 8px, #fff 6px, transparent 7px) #a6a8be; }
.toggle:checked { background: radial-gradient(circle at 24px 8px, #fff 6px, transparent 7px) #2962f6; }
.card-head .toggle { margin-left: 7px; }
.card-body { display: grid; grid-template-columns: 1fr 1fr; gap: 8px; padding: 8px 8px 6px; }
.pick { position: relative; min-width: 0; }
.pick select { appearance: none; width: 100%; height: 32px; padding: 0 40px 0 7px; font-size: 12px; border: 1px solid #e4e5ec; border-radius: 5px; background: #fff; }
.pick .chev { position: absolute; right: 8px; top: 10px; pointer-events: none; }
.columns { display: flex; flex-direction: column; min-height: 0; min-width: 0; }
.col-head { display: flex; align-items: center; height: 20px; }
h4 { font-size: 13px; font-weight: 500; margin-right: auto; }
.col-head label { margin-right: 6px; color: #9fa1b3; font-size: 12px; }
.search { display: flex; align-items: center; flex: none; height: 32px; gap: 6px; margin-top: 7px; padding: 0 8px; border: 1px solid #e4e5ec; border-radius: 5px; }
.search svg { width: 14px; height: 14px; }
.search input { width: 100%; min-width: 0; border: 0; outline: 0; padding: 0; background: none; }
.search input::placeholder { color: #74768a; opacity: 1; }
.list { position: relative; flex: 1; min-height: 0; overflow: hidden; margin: 9px -4px 8px 0; padding-right: 4px; }
.thumb { position: absolute; right: 0; top: 3px; width: 4px; height: 100px; border-radius: 2px; background: #d3ddfd; }
.row { display: flex; align-items: center; height: 45px; padding: 0 6px 10px 3px; border-bottom: 1px solid #e8e9f0; }
.row strong { margin-right: auto; }
strong { font-weight: 500; }
.row-ic { width: 18px; height: 18px; margin-right: 4px; }
.addbtn { width: 45px; height: 24px; justify-content: center; margin-right: 8px; border: 1px solid #2962f6; border-radius: 4px; color: #2962f6; font-size: 11px; font-weight: 500; }
.source { display: flex; align-items: flex-start; padding: 3px 6px 0 3px; }
.source .row-ic { margin-top: 3px; }
.source .chev { margin-top: 6px; }
.source-text { display: flex; flex-direction: column; margin-right: auto; line-height: 19px; }
.source-text span { color: #85879c; font-size: 12px; }
.cols { list-style: none; padding: 6px 0 0 11px; }
.cols li { display: flex; align-items: center; gap: 6px; height: 32px; }
.ic-t { width: 14px; height: 14px; color: #3a6cf2; }
.ic-n { width: 18px; height: 10px; }
.cols .num { margin-left: -2px; gap: 4px; }
.join { flex: none; height: 32px; justify-content: center; gap: 4px; border-radius: 5px; background: #edf0f9; color: #2962f6; font-weight: 500; }
.join svg { width: 16px; height: 12px; }
```
